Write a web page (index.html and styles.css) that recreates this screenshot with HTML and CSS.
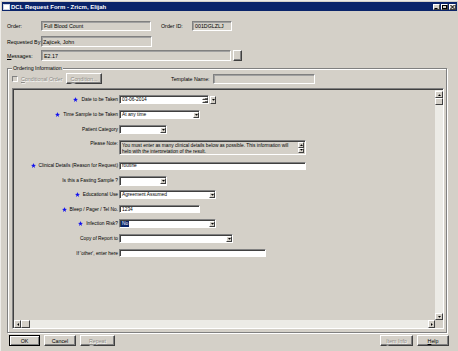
FILE: index.html
```html
<!DOCTYPE html>
<html>
<head>
<meta charset="utf-8">
<title>DCL Request Form</title>
<link rel="stylesheet" href="styles.css">
</head>
<body>
<div class="win">
  <div class="titlebar">
    <span class="ticon"></span>
    <span class="ttext">DCL Request Form - Zricm, Elijah</span>
    <span class="tbtns">
      <span class="tb"><svg width="5" height="4" viewBox="0 0 5 4"><rect x="0.5" y="3" width="3" height="1" fill="#000"/></svg></span>
      <span class="tb"><svg width="5" height="4" viewBox="0 0 5 4"><rect x="0.5" y="0.5" width="4" height="3" fill="none" stroke="#000" stroke-width="1"/></svg></span>
      <span class="tb"><svg width="5" height="4" viewBox="0 0 5 4"><path d="M0.5 0 L4.5 4 M4.5 0 L0.5 4" stroke="#000" stroke-width="1"/></svg></span>
    </span>
  </div>

  <div class="hdr">
    <div class="hrow r1">
      <span class="hl">Order:</span>
      <span class="ro w-order">Full Blood Count</span>
      <span class="hl hl-id">Order ID:</span>
      <span class="ro w-id">001DGLZLJ</span>
    </div>
    <div class="hrow r2">
      <span class="hl">Requested By:</span>
      <span class="ro w-req">Zajicek, John</span>
    </div>
    <div class="hrow r3">
      <span class="hl"><u>M</u>essages:</span>
      <span class="ro w-msg">E2.17</span>
      <span class="minibtn"></span>
    </div>
  </div>

  <div class="group">
    <span class="legend">Ordering Information</span>
    <div class="grow">
      <span class="chk"></span>
      <span class="chklab dis"><u>C</u>onditional Order</span>
      <span class="btn small dis"><u>C</u>ondition...</span>
      <span class="tlab">Template Name:</span>
      <span class="ro w-tmpl"></span>
    </div>

    <div class="panel">
      <div class="pcontent">
        <div class="frow">
          <span class="flab"><svg class="star" viewBox="0 0 10 10"><polygon points="5,0 6.2,3.6 10,3.8 7,6.1 8.1,9.8 5,7.6 1.9,9.8 3,6.1 0,3.8 3.8,3.6"/></svg>Date to be Taken</span>
          <span class="inp w-date">03-06-2014
            <span class="spin">
              <span class="spb up"></span>
              <span class="spb down"></span>
            </span>
          </span>
          <span class="ddsolo"><svg width="3" height="2" viewBox="0 0 6 4"><polygon points="0,0 6,0 3,3.5"/></svg></span>
        </div>

        <div class="frow">
          <span class="flab"><svg class="star" viewBox="0 0 10 10"><polygon points="5,0 6.2,3.6 10,3.8 7,6.1 8.1,9.8 5,7.6 1.9,9.8 3,6.1 0,3.8 3.8,3.6"/></svg>Time Sample to be Taken</span>
          <span class="inp w-81">At any time<span class="dd"><svg width="3" height="2" viewBox="0 0 6 4"><polygon points="0,0 6,0 3,3.5"/></svg></span></span>
        </div>

        <div class="frow">
          <span class="flab">Patient Category</span>
          <span class="inp w-48"><span class="dd"><svg width="3" height="2" viewBox="0 0 6 4"><polygon points="0,0 6,0 3,3.5"/></svg></span></span>
        </div>

        <div class="frow note">
          <span class="flab top">Please Note:</span>
          <span class="notebox">
            <span class="notetext">You must enter as many clinical details below as possible.  This information will<br>help with the interpretation of the result.</span>
            <span class="nscroll">
              <span class="sb"><svg width="3" height="2" viewBox="0 0 6 4"><polygon points="0,4 6,4 3,0.5"/></svg></span>
              <span class="sb"><svg width="3" height="2" viewBox="0 0 6 4"><polygon points="0,0 6,0 3,3.5"/></svg></span>
            </span>
          </span>
        </div>

        <div class="frow h8">
          <span class="flab"><svg class="star" viewBox="0 0 10 10"><polygon points="5,0 6.2,3.6 10,3.8 7,6.1 8.1,9.8 5,7.6 1.9,9.8 3,6.1 0,3.8 3.8,3.6"/></svg>Clinical Details (Reason for Request)</span>
          <span class="inp w-187">routine</span>
        </div>

        <div class="frow h10">
          <span class="flab">Is this a Fasting Sample ?</span>
          <span class="inp w-48"><span class="dd"><svg width="3" height="2" viewBox="0 0 6 4"><polygon points="0,0 6,0 3,3.5"/></svg></span></span>
        </div>

        <div class="frow">
          <span class="flab"><svg class="star" viewBox="0 0 10 10"><polygon points="5,0 6.2,3.6 10,3.8 7,6.1 8.1,9.8 5,7.6 1.9,9.8 3,6.1 0,3.8 3.8,3.6"/></svg>Educational Use</span>
          <span class="inp w-97">Agreement Assumed<span class="dd"><svg width="3" height="2" viewBox="0 0 6 4"><polygon points="0,0 6,0 3,3.5"/></svg></span></span>
        </div>

        <div class="frow h8">
          <span class="flab"><svg class="star" viewBox="0 0 10 10"><polygon points="5,0 6.2,3.6 10,3.8 7,6.1 8.1,9.8 5,7.6 1.9,9.8 3,6.1 0,3.8 3.8,3.6"/></svg>Bleep / Pager / Tel No.</span>
          <span class="inp w-81">1234</span>
        </div>

        <div class="frow">
          <span class="flab"><svg class="star" viewBox="0 0 10 10"><polygon points="5,0 6.2,3.6 10,3.8 7,6.1 8.1,9.8 5,7.6 1.9,9.8 3,6.1 0,3.8 3.8,3.6"/></svg>Infection Risk?</span>
          <span class="inp w-97"><span class="sel">No</span><span class="dd"><svg width="3" height="2" viewBox="0 0 6 4"><polygon points="0,0 6,0 3,3.5"/></svg></span></span>
        </div>

        <div class="frow">
          <span class="flab">Copy of Report to</span>
          <span class="inp w-114"><span class="dd"><svg width="3" height="2" viewBox="0 0 6 4"><polygon points="0,0 6,0 3,3.5"/></svg></span></span>
        </div>

        <div class="frow h8">
          <span class="flab">If 'other', enter here</span>
          <span class="inp w-147"></span>
        </div>
      </div>

      <div class="vscroll">
        <span class="sbtn"><svg width="3" height="2" viewBox="0 0 6 4"><polygon points="0,4 6,4 3,0.5"/></svg></span>
        <span class="thumb"></span>
        <span class="track"></span>
        <span class="sbtn"><svg width="3" height="2" viewBox="0 0 6 4"><polygon points="0,0 6,0 3,3.5"/></svg></span>
      </div>
      <div class="hscroll">
        <span class="sbtn"><svg width="2" height="3" viewBox="0 0 4 6"><polygon points="4,0 4,6 0.5,3"/></svg></span>
        <span class="thumb"></span>
        <span class="track"></span>
        <span class="sbtn"><svg width="2" height="3" viewBox="0 0 4 6"><polygon points="0,0 0,6 3.5,3"/></svg></span>
      </div>
      <div class="corner"></div>
    </div>
  </div>

  <div class="footer">
    <span class="btn def w-ok">OK</span>
    <span class="btn w-cancel">Cancel</span>
    <span class="btn dis w-repeat"><u>R</u>epeat</span>
    <span class="spacer"></span>
    <span class="btn dis w-info"><u>I</u>tem Info</span>
    <span class="btn w-help"><u>H</u>elp</span>
  </div>
</div>
</body>
</html>
```

FILE: styles.css
```css
* { box-sizing: border-box; }

body {
  margin: 0;
  width: 458px;
  height: 351px;
  overflow: hidden;
  background: #d4d0c8;
  font-family: "Liberation Sans", Arial, sans-serif;
  font-size: 5.3px;
  color: #000;
}

.win {
  width: 458px;
  height: 351px;
  background: #d4d0c8;
  border-top: 1px solid #eeece8;
  border-left: 1px solid #eeece8;
  padding-top: 1px;
  padding-left: 1px;
}

/* title bar */
.titlebar {
  height: 9px;
  margin-right: 1px;
  background: #0a246a;
  display: flex;
  align-items: center;
  padding-left: 1px;
  color: #fff;
  font-weight: bold;
  font-size: 6px;
  white-space: nowrap;
}
.ticon {
  width: 7px;
  height: 6px;
  background: #fff;
  border: 1px solid #c8d0e0;
  margin-right: 1px;
}
.tbtns {
  margin-left: auto;
  display: flex;
  gap: 1px;
  padding-right: 1px;
}
.tb {
  width: 7px;
  height: 6px;
  background: #d4d0c8;
  border: 1px solid;
  border-color: #fff #404040 #404040 #fff;
  display: flex;
  align-items: center;
  justify-content: center;
}
.tb svg { display: block; }

/* header */
.hdr { padding-left: 5px; }
.hrow { display: flex; align-items: center; }
.r1 { margin-top: 10px; height: 10px; }
.r2 { margin-top: 5px; height: 11px; }
.r3 { margin-top: 3px; height: 11px; }
.hl { width: 34px; white-space: nowrap; }
.hl-id { width: 31px; margin-left: 10px; }

.ro {
  height: 100%;
  background: #d4d0c8;
  border: 1px solid;
  border-color: #808080 #fff #fff #808080;
  box-shadow: inset 1px 1px 0 #a0a0a0;
  padding-left: 2px;
  display: flex;
  align-items: center;
  white-space: nowrap;
  overflow: hidden;
}
.w-order { width: 110px; }
.w-id { width: 40px; }
.w-req { width: 111px; padding-left: 1px; }
.w-msg { width: 190px; }
.w-tmpl { width: 102px; height: 10px; }

.minibtn {
  width: 9px;
  height: 11px;
  margin-left: 2px;
  background: #d4d0c8;
  border: 1px solid;
  border-color: #fff #404040 #404040 #fff;
  box-shadow: inset -1px -1px 0 #808080;
}

/* group box */
.group {
  position: relative;
  margin: 7px 0 0 5px;
  width: 440px;
  height: 265px;
  border: 1px solid #808080;
  box-shadow: 1px 1px 0 #fff, inset 1px 1px 0 #fff;
  padding: 4px 2px 3px 4px;
}
.legend {
  position: absolute;
  top: -4px;
  left: 4px;
  padding: 0 1px;
  background: #d4d0c8;
  white-space: nowrap;
}

.grow {
  display: flex;
  align-items: center;
  height: 11px;
}
.chk {
  width: 6px;
  height: 6px;
  border: 1px solid;
  border-color: #808080 #fff #fff #808080;
  background: #d4d0c8;
}
.chklab {
  width: 45px;
  margin-left: 3px;
  white-space: nowrap;
}
.dis {
  color: #8c8a85;
  text-shadow: 0.6px 0.6px 0 #fff;
}
.tlab {
  width: 42px;
  margin-left: 69px;
  white-space: nowrap;
}

/* buttons */
.btn {
  height: 11px;
  display: flex;
  align-items: center;
  justify-content: center;
  background: #d4d0c8;
  border: 1px solid;
  border-color: #fff #404040 #404040 #fff;
  box-shadow: inset -1px -1px 0 #808080;
  white-space: nowrap;
}
.btn.small { width: 36px; }
.btn.def {
  border-color: #000;
  box-shadow: inset 1px 1px 0 #fff, inset -1px -1px 0 #808080;
}

/* scroll panel */
.panel {
  width: 432px;
  height: 241px;
  margin-top: 4px;
  border: 1px solid;
  border-color: #808080 #fff #fff #808080;
  box-shadow: inset 1px 1px 0 #404040;
  padding: 1px 0 0 1px;
  display: grid;
  grid-template-columns: 1fr 8px;
  grid-template-rows: 1fr 8px;
}
.pcontent {
  overflow: hidden;
  padding-top: 5px;
  font-size: 4.85px;
}

.frow {
  display: flex;
  align-items: center;
  height: 9px;
  margin-bottom: 6px;
}
.frow.note { height: 15px; margin-bottom: 6.5px; align-items: flex-start; }
.frow.h8 { height: 8px; }
.frow.h10 { height: 10px; margin-bottom: 4.5px; }

.flab {
  width: 104px;
  margin-right: 1px;
  display: flex;
  align-items: center;
  justify-content: flex-end;
  white-space: nowrap;
}
.flab.top { padding-top: 1px; }
.star {
  width: 5px;
  height: 5px;
  margin-right: 3px;
  fill: #1010ee;
}

.inp {
  height: 100%;
  background: #fff;
  border: 1px solid;
  border-color: #808080 #fff #fff #808080;
  box-shadow: inset 1px 1px 0 #404040;
  padding-left: 2px;
  display: flex;
  align-items: center;
  white-space: nowrap;
  overflow: hidden;
}
.w-date { width: 90px; }
.w-48 { width: 48px; }
.w-81 { width: 81px; }
.w-97 { width: 97px; }
.w-114 { width: 114px; }
.w-147 { width: 147px; }
.w-187 { width: 187px; }

.dd, .ddsolo, .sb, .sbtn {
  background: #d4d0c8;
  border: 1px solid;
  border-color: #fff #404040 #404040 #fff;
  display: flex;
  align-items: center;
  justify-content: center;
}
.dd {
  margin-left: auto;
  width: 6px;
  height: 6px;
}
.ddsolo {
  width: 6px;
  height: 8px;
  margin-left: 1px;
}
.dd svg, .ddsolo svg, .sb svg, .sbtn svg { display: block; fill: #000; }

.spin {
  margin-left: auto;
  display: flex;
  flex-direction: column;
  height: 100%;
  padding: 0.5px 0;
}
.spb {
  position: relative;
  width: 6px;
  height: 3px;
  background: #d4d0c8;
  border-right: 0.6px solid #404040;
  border-bottom: 0.6px solid #404040;
  border-top: 0.6px solid #fff;
  border-left: 0.6px solid #fff;
}
.spb::after {
  content: "";
  position: absolute;
  left: 1.6px;
  top: 0.5px;
  border-left: 1.2px solid transparent;
  border-right: 1.2px solid transparent;
}
.spb.up::after { border-bottom: 1.2px solid #000; }
.spb.down::after { border-top: 1.2px solid #000; }

.sel {
  background: #0a246a;
  color: #fff;
  padding: 0 1px;
  margin-left: -1px;
  line-height: 6px;
}

.notebox {
  width: 187px;
  height: 15px;
  background: #d4d0c8;
  border: 1px solid;
  border-color: #808080 #fff #fff #808080;
  box-shadow: inset 1px 1px 0 #404040;
  display: flex;
  padding: 1px 1px 1px 2px;
}
.notetext {
  flex: 1;
  line-height: 6px;
  white-space: nowrap;
  overflow: hidden;
  padding-top: 0.5px;
  font-size: 4.8px;
}
.nscroll {
  display: flex;
  flex-direction: column;
  justify-content: space-between;
  width: 6px;
}
.nscroll .sb { height: 6px; }

.vscroll {
  display: flex;
  flex-direction: column;
  background: #ecebe6;
  padding-top: 1px;
}
.vscroll .sbtn, .vscroll .thumb { height: 7px; }
.hscroll {
  display: flex;
  background: #ecebe6;
}
.hscroll .sbtn { width: 7px; }
.hscroll .thumb { width: 9px; }
.thumb {
  background: #d4d0c8;
  border: 1px solid;
  border-color: #fff #404040 #404040 #fff;
}
.track { flex: 1; }
.corner { background: #d4d0c8; }

/* footer */
.footer {
  display: flex;
  margin-top: 2px;
  padding-left: 7px;
  padding-right: 9px;
}
.footer .btn + .btn { margin-left: 4px; }
.spacer { flex: 1; }
.w-ok { width: 31px; }
.w-cancel { width: 32px; }
.w-repeat { width: 35px; }
.w-info { width: 33px; }
.footer .w-help { width: 32px; margin-left: 3px; }
```
